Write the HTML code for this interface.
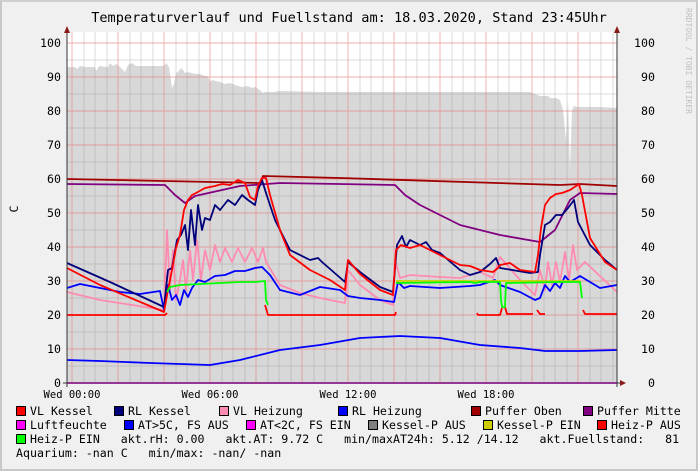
<!DOCTYPE html>
<html><head><meta charset="utf-8"><style>
html,body{margin:0;padding:0;}
body{width:698px;height:471px;background:#f0f0f0;overflow:hidden;position:relative;font-family:"DejaVu Sans Mono","Liberation Mono",monospace;}
.frame{position:absolute;left:0;top:0;width:694px;height:467px;border:2px solid #c8c8c8;border-top-color:#d0d0d0;}
.lg{position:absolute;font-size:11.6px;color:#000;white-space:pre;line-height:14px;}
.bx{position:absolute;width:8px;height:8px;border:1px solid #000;}
</style></head><body>
<div class="frame"></div>
<svg width="698" height="471" style="position:absolute;left:0;top:0" font-family="DejaVu Sans Mono, Liberation Mono, monospace">
<text x="349" y="22" font-size="13.6" text-anchor="middle" fill="#000">Temperaturverlauf und Fuellstand am: 18.03.2020, Stand 23:45Uhr</text>
<text x="686" y="8" font-size="8" fill="#c0c0c0" transform="rotate(90 686 8)">RRDTOOL / TOBI OETIKER</text>
<text x="18" y="209" font-size="11.6" fill="#000" transform="rotate(-90 18 209)" text-anchor="middle">C</text>
<rect x="67" y="32" width="550" height="351" fill="#fff"/>
<polygon fill="#d8d8d8" points="67,383 67,67 75,67 77,69 80,66 85,67 95,67 96,71 99,66 108,67 110,63 113,66 116,64 119,66 125,72 128,65 132,63 136,66 164,66 166,63 169,67 171,80 172,88 174,84 176,73 178,72 181,68 183,70 185,73 188,72 195,74 200,74 205,76 208,76 210,82 212,80 216,81 220,82 225,84 230,83 235,85 242,87 248,86 252,88 255,87 260,90 263,93 265,92 270,92 275,92 278,91 320,92 530,92 535,94 540,96 548,96 550,98 556,98 560,100 563,110 566,140 568,100 570,170 572,110 574,106 578,107 600,107 617,108 617,383"/>
<g stroke-width="0.7" opacity="0.5">
<path d="M67,366H617M67,332H617M67,298H617M67,264H617M67,230H617M67,196H617M67,162H617M67,128H617M67,94H617M67,60H617" stroke="#999"/>
<path d="M84,32V383M95,32V383M107,32V383M130,32V383M141,32V383M153,32V383M176,32V383M187,32V383M199,32V383M222,32V383M233,32V383M245,32V383M268,32V383M279,32V383M291,32V383M314,32V383M325,32V383M337,32V383M360,32V383M371,32V383M383,32V383M406,32V383M417,32V383M429,32V383M452,32V383M463,32V383M475,32V383M498,32V383M509,32V383M521,32V383M544,32V383M555,32V383M567,32V383M590,32V383M601,32V383M613,32V383" stroke="#999"/>
</g>
<g stroke="#e88080" stroke-width="0.9" opacity="0.65">
<path d="M67,349H617M67,315H617M67,281H617M67,247H617M67,213H617M67,179H617M67,145H617M67,111H617M67,77H617M67,43H617"/>
<path d="M72,32V383M118,32V383M164,32V383M210,32V383M256,32V383M302,32V383M348,32V383M394,32V383M440,32V383M486,32V383M532,32V383M578,32V383"/>
</g>
<g fill="none" stroke-width="1.8" stroke-linejoin="round">
<polyline stroke="#a00000" points="67,179 260,183 263,176 340,178 560,185 580,184 617,186"/>
<polyline stroke="#800080" points="67,184 165,185 175,195 185,203 195,196 240,186 280,183 395,185 405,195 420,205 460,225 500,235 540,242 555,230 570,200 580,193 617,194"/>
<polyline stroke="#ff0000" points="67,315 165,315 167,313"/>
<polyline stroke="#ff0000" points="265,305 268,315 395,315 396,312"/>
<polyline stroke="#ff0000" points="477,313 478,315 500,315 502,308"/>
<polyline stroke="#ff0000" points="505,307 507,314 533,314"/>
<polyline stroke="#ff0000" points="537,310 540,314 545,314"/>
<polyline stroke="#ff0000" points="583,310 585,314 617,314"/>
<polyline stroke="#ff8cb0" points="67,292 100,300 164,310 166,260 167,230 170,290 173,250 176,300 180,280 183,260 186,290 190,250 193,280 197,240 201,280 205,250 210,270 215,245 220,262 225,248 232,262 238,248 245,262 252,248 258,262 263,248 266,262 280,285 300,293 320,298 345,303 348,270 360,285 380,300 393,305 395,260 400,278 410,275 440,277 460,278 480,272 493,278 500,257 520,280 535,295 540,270 545,290 548,262 552,285 556,262 560,282 565,252 569,280 573,245 577,270 585,262 617,292"/>
<polyline stroke="#0000ff" points="67,288 80,284 100,288 120,292 140,294 160,291 164,310 168,285 172,300 176,295 180,305 184,290 188,297 192,288 198,280 205,282 215,276 225,275 235,271 245,271 255,268 262,267 270,275 280,290 300,295 320,287 340,290 348,296 360,298 380,300 394,302 398,282 404,288 410,286 440,288 470,286 480,285 495,280 500,285 520,292 535,300 540,298 545,285 550,291 555,283 560,288 565,276 570,282 580,276 600,288 617,285"/>
<polyline stroke="#00007a" points="67,263 110,282 164,307 168,270 172,268 177,240 181,235 185,225 188,250 191,210 195,245 198,205 202,230 205,218 210,220 215,205 220,210 228,200 235,205 242,195 248,200 255,205 258,190 262,180 266,193 275,220 290,250 310,260 318,258 322,262 345,282 348,262 360,272 380,287 393,292 397,245 402,236 406,247 410,240 416,243 420,245 426,242 432,250 440,253 460,270 470,275 480,272 490,264 496,258 500,268 530,273 538,272 540,255 545,225 550,222 556,215 562,215 568,208 574,200 578,222 590,245 605,260 617,270"/>
<polyline stroke="#ff0000" points="67,268 100,285 164,312 168,290 172,270 176,248 180,235 184,210 188,200 192,195 196,193 205,188 215,186 222,184 230,185 238,180 245,183 250,197 255,200 258,186 262,178 266,178 270,195 280,230 290,255 310,270 330,280 345,290 348,260 360,274 380,290 393,295 396,250 401,245 410,248 420,245 440,255 460,265 470,266 480,270 493,272 498,268 500,265 510,263 520,270 535,272 538,255 541,228 545,205 550,198 556,194 562,193 570,190 576,186 579,184 582,195 590,238 605,262 617,270"/>
<polyline stroke="#00ff00" points="167,292 170,287 180,285 220,283 240,282 255,282 265,281 266,300 268,305"/>
<polyline stroke="#cccc00" points="396,281 580,281"/>
<polyline stroke="#00ff00" points="396,283 470,282 475,283 480,282 500,282 501,300 502,307 505,307 506,283 560,282 575,282 580,282 582,298"/>
<polyline stroke="#0000ff" points="67,360 100,361 150,363 210,365 240,360 280,350 320,345 360,338 400,336 440,338 480,345 520,348 545,351 580,351 617,350"/>
<polyline stroke="#ff00ff" points="67,383 617,383"/>
</g>
<path d="M67,387V30M63,383H621M617,387V30" stroke="#333" stroke-width="1" fill="none"/>
<path d="M64,33L67,26L70,33Z M614,33L617,26L620,33Z M620,380L626,383L620,386Z" fill="#8b1a1a"/>
<g font-size="11.6" fill="#000" text-anchor="end">
<text x="61" y="47">100</text><text x="61" y="81">90</text><text x="61" y="115">80</text><text x="61" y="149">70</text><text x="61" y="183">60</text><text x="61" y="217">50</text><text x="61" y="251">40</text><text x="61" y="285">30</text><text x="61" y="319">20</text><text x="61" y="353">10</text><text x="61" y="387">0</text>
</g>
<g font-size="11.6" fill="#000" text-anchor="end">
<text x="655" y="47">100</text><text x="655" y="81">90</text><text x="655" y="115">80</text><text x="655" y="149">70</text><text x="655" y="183">60</text><text x="655" y="217">50</text><text x="655" y="251">40</text><text x="655" y="285">30</text><text x="655" y="319">20</text><text x="655" y="353">10</text><text x="655" y="387">0</text>
</g>
<g font-size="10.5" fill="#000" text-anchor="middle">
<text x="72" y="398">Wed 00:00</text><text x="210" y="398">Wed 06:00</text><text x="348" y="398">Wed 12:00</text><text x="486" y="398">Wed 18:00</text>
</g>
</svg>
<div class="bx" style="left:16px;top:406px;background:#f00"></div><div class="lg" style="left:30px;top:404px">VL Kessel</div>
<div class="bx" style="left:114px;top:406px;background:#00007a"></div><div class="lg" style="left:128px;top:404px">RL Kessel</div>
<div class="bx" style="left:219px;top:406px;background:#ff8cb0"></div><div class="lg" style="left:233px;top:404px">VL Heizung</div>
<div class="bx" style="left:338px;top:406px;background:#00f"></div><div class="lg" style="left:352px;top:404px">RL Heizung</div>
<div class="bx" style="left:471px;top:406px;background:#a00000"></div><div class="lg" style="left:485px;top:404px">Puffer Oben</div>
<div class="bx" style="left:583px;top:406px;background:#800080"></div><div class="lg" style="left:597px;top:404px">Puffer Mitte</div>
<div class="bx" style="left:16px;top:420px;background:#f0f"></div><div class="lg" style="left:30px;top:418px">Luftfeuchte</div>
<div class="bx" style="left:124px;top:420px;background:#00f"></div><div class="lg" style="left:138px;top:418px">AT&gt;5C, FS AUS</div>
<div class="bx" style="left:246px;top:420px;background:#f0f"></div><div class="lg" style="left:260px;top:418px">AT&lt;2C, FS EIN</div>
<div class="bx" style="left:368px;top:420px;background:#808080"></div><div class="lg" style="left:382px;top:418px">Kessel-P AUS</div>
<div class="bx" style="left:483px;top:420px;background:#cccc00"></div><div class="lg" style="left:497px;top:418px">Kessel-P EIN</div>
<div class="bx" style="left:597px;top:420px;background:#f00"></div><div class="lg" style="left:611px;top:418px">Heiz-P AUS</div>
<div class="bx" style="left:16px;top:434px;background:#0f0"></div><div class="lg" style="left:30px;top:432px">Heiz-P EIN   akt.rH: 0.00   akt.AT: 9.72 C   min/maxAT24h: 5.12 /14.12   akt.Fuellstand:   81</div>
<div class="lg" style="left:16px;top:446px">Aquarium: -nan C   min/max: -nan/ -nan</div>
</body></html>
